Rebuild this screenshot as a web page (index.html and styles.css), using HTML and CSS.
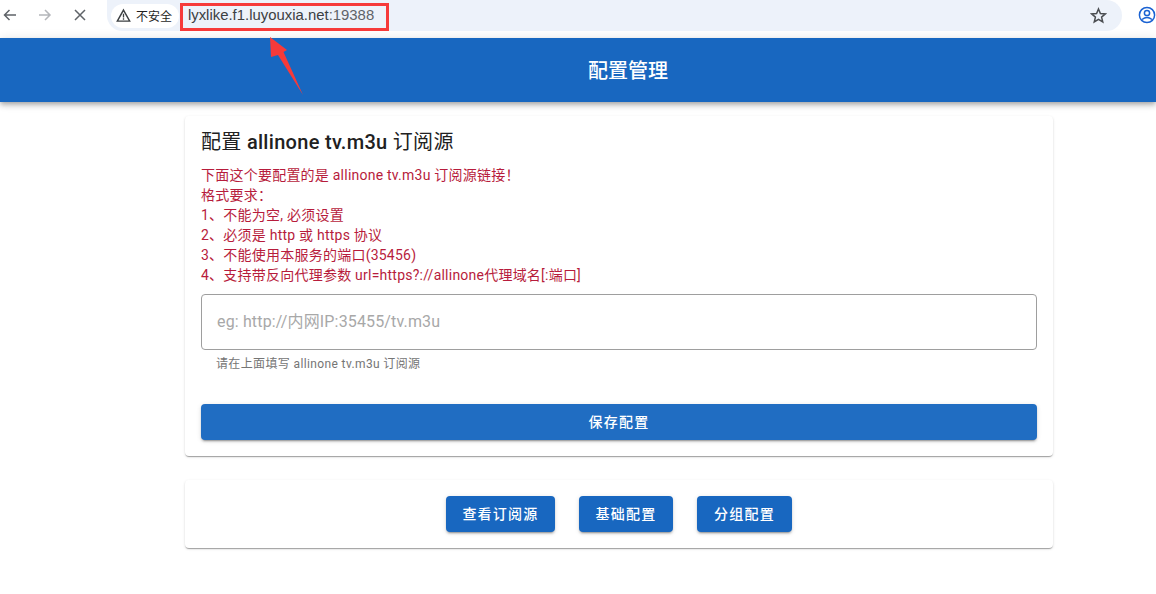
FILE: index.html
```html
<!DOCTYPE html>
<html lang="zh-CN">
<head>
<meta charset="utf-8">
<title>配置管理</title>
<link rel="stylesheet" href="styles.css">
</head>
<body>
<div class="chrome">
  <div class="nav-icons">
    <svg class="nav-icon" viewBox="0 0 16 16"><path d="M14 8H2.500M7.500 3L2.500 8l5 5" fill="none" stroke="#5f6368" stroke-width="1.5"/></svg>
    <svg class="nav-icon" viewBox="0 0 16 16"><path d="M2 8h11M8 3l5 5-5 5" fill="none" stroke="#b4b6ba" stroke-width="1.5"/></svg>
    <svg class="nav-icon" viewBox="0 0 16 16"><path d="M3 3l10 10M13 3L3 13" fill="none" stroke="#5f6368" stroke-width="1.5"/></svg>
  </div>
  <div class="omnibox">
    <div class="chip">
      <svg class="warn" viewBox="0 0 16 16"><path d="M8 2.200L14.600 14H1.400z" fill="none" stroke="#3c4043" stroke-width="1.5"/><path d="M8 6.200v4M8 11v1.500" stroke="#3c4043" stroke-width="1.4"/></svg>
      <span>不安全</span>
    </div>
    <span class="url">lyxlike.f1.luyouxia.net<span class="port">:19388</span></span>
    <svg class="star" viewBox="0 0 16 16"><path d="M8 1.800l1.800 4.300 4.700.4-3.600 3 1.100 4.600L8 11.600l-4 2.500 1.100-4.600-3.600-3 4.700-.4z" fill="none" stroke="#4a4d51" stroke-width="1.4"/></svg>
  </div>
  <svg class="profile" viewBox="0 0 18 18"><circle cx="9" cy="9" r="7.600" fill="none" stroke="#1a62d2" stroke-width="1.500"/><circle cx="9" cy="7" r="2.600" fill="none" stroke="#1a62d2" stroke-width="1.500"/><path d="M4 13.500c3-2.400 7-2.400 10 0" fill="none" stroke="#1a62d2" stroke-width="1.500"/></svg>
</div>

<header class="app-bar">配置管理</header>

<main class="content">
  <section class="card main-card">
    <h1 class="title">配置 <b>allinone tv.m3u</b> 订阅源</h1>
    <div class="notes">
      <div>下面这个要配置的是 allinone tv.m3u 订阅源链接！</div>
      <div>格式要求：</div>
      <div>1、不能为空, 必须设置</div>
      <div>2、必须是 http 或 https 协议</div>
      <div>3、不能使用本服务的端口(35456)</div>
      <div>4、支持带反向代理参数 url=https?://allinone代理域名[:端口]</div>
    </div>
    <input class="field" type="text" placeholder="eg: http://内网IP:35455/tv.m3u">
    <div class="hint">请在上面填写 allinone tv.m3u 订阅源</div>
    <button class="btn btn-full" type="button">保存配置</button>
  </section>
  <section class="card nav-card">
    <button class="btn btn-a" type="button">查看订阅源</button>
    <button class="btn btn-b" type="button">基础配置</button>
    <button class="btn btn-c" type="button">分组配置</button>
  </section>
</main>

<div class="mark-box"></div>
<svg class="mark-arrow" viewBox="0 0 34 59"><path d="M0 0L17 13 13.500 15 33 58 8 18 1 20z" fill="#f63a3a"/></svg>
</body>
</html>
```
FILE: styles.css
```css
* { box-sizing: border-box; }
html, body { margin: 0; height: 100%; overflow: hidden; }
body {
  position: relative;
  background: #fff;
  font-family: Roboto, "Noto Sans CJK SC", sans-serif;
  color: #212121;
}
.chrome {
  height: 38px;
  display: flex;
  align-items: flex-start;
  background: #fff;
}
.nav-icons {
  width: 107px;
  height: 29px;
  display: flex;
  align-items: center;
  gap: 19px;
  padding-left: 2px;
}
.nav-icon { width: 16px; height: 16px; }
.omnibox {
  width: 1016px;
  height: 31px;
  display: flex;
  align-items: center;
  padding: 0 15px 0 4px;
  background: #edf2fa;
  border-radius: 0 16px 16px 16px;
}
.chip {
  width: 68px;
  height: 24px;
  display: flex;
  align-items: center;
  gap: 5px;
  padding-left: 5px;
  background: #fff;
  border-radius: 12px;
  font-size: 12px;
  color: #1f1f1f;
  white-space: nowrap;
}
.warn { width: 15px; height: 15px; flex: none; }
.url {
  margin: -2px 0 0 9px;
  font-family: "Liberation Sans", sans-serif;
  font-size: 14.9px;
  color: #3c4043;
  white-space: nowrap;
}
.port { color: #5f6368; }
.star { width: 17px; height: 17px; margin-left: auto; }
.profile { width: 18px; height: 18px; margin: 6px 0 0 16px; flex: none; }
.app-bar {
  height: 64px;
  display: flex;
  align-items: center;
  justify-content: center;
  padding: 0 0 2px 100px;
  background: #1867c0;
  color: #fff;
  font-size: 20px;
  font-weight: 500;
  box-shadow: 0 2px 4px -1px rgba(0,0,0,.2), 0 4px 5px rgba(0,0,0,.14), 0 1px 10px rgba(0,0,0,.12);
}
.content {
  width: 868px;
  margin: 14px auto 0 185px;
  display: flex;
  flex-direction: column;
  gap: 24px;
}
.card {
  background: #fff;
  border-radius: 4px;
  box-shadow: 0 2px 1px -1px rgba(0,0,0,.2), 0 1px 1px rgba(0,0,0,.14), 0 1px 3px rgba(0,0,0,.12);
}
.main-card {
  height: 340px;
  padding: 12px 16px 0;
  display: flex;
  flex-direction: column;
}
.title {
  margin: 0;
  font-size: 20px;
  line-height: 28px;
  font-weight: 400;
  letter-spacing: .3px;
}
.title b { font-weight: 500; }
.notes {
  margin-top: 9px;
  font-size: 14px;
  line-height: 20px;
  letter-spacing: .23px;
  color: #b71c3c;
}
.field {
  width: 100%;
  height: 56px;
  margin-top: 9px;
  padding: 0 15px 2px;
  border: 1px solid #9e9e9e;
  border-radius: 4px;
  outline: none;
  font: 16px Roboto, "Noto Sans CJK SC", sans-serif;
  letter-spacing: .15px;
  color: #212121;
  background: #fff;
}
.field::placeholder { color: #a8a8a8; opacity: 1; }
.hint {
  margin-top: 6px;
  padding-left: 15px;
  font-size: 12px;
  line-height: 16px;
  letter-spacing: .37px;
  color: #757575;
}
.btn {
  height: 36px;
  padding: 0 0 2px;
  border: 0;
  border-radius: 4px;
  background: #1867c0;
  color: #fff;
  font: 500 14px Roboto, "Noto Sans CJK SC", sans-serif;
  letter-spacing: 1.25px;
  box-shadow: 0 3px 1px -2px rgba(0,0,0,.2), 0 2px 2px rgba(0,0,0,.14), 0 1px 5px rgba(0,0,0,.12);
}
.btn-full { width: 100%; margin-top: 32px; background: #206dc2; }
.nav-card {
  height: 68px;
  display: flex;
  align-items: center;
  justify-content: center;
  gap: 24px;
}
.btn-a { width: 109px; }
.btn-b { width: 94px; }
.btn-c { width: 95px; }
.mark-box {
  position: absolute;
  left: 180px;
  top: 3px;
  width: 209px;
  height: 28px;
  border: 3px solid #f63a3a;
}
.mark-arrow {
  position: absolute;
  left: 270px;
  top: 37px;
  width: 34px;
  height: 59px;
}
```
